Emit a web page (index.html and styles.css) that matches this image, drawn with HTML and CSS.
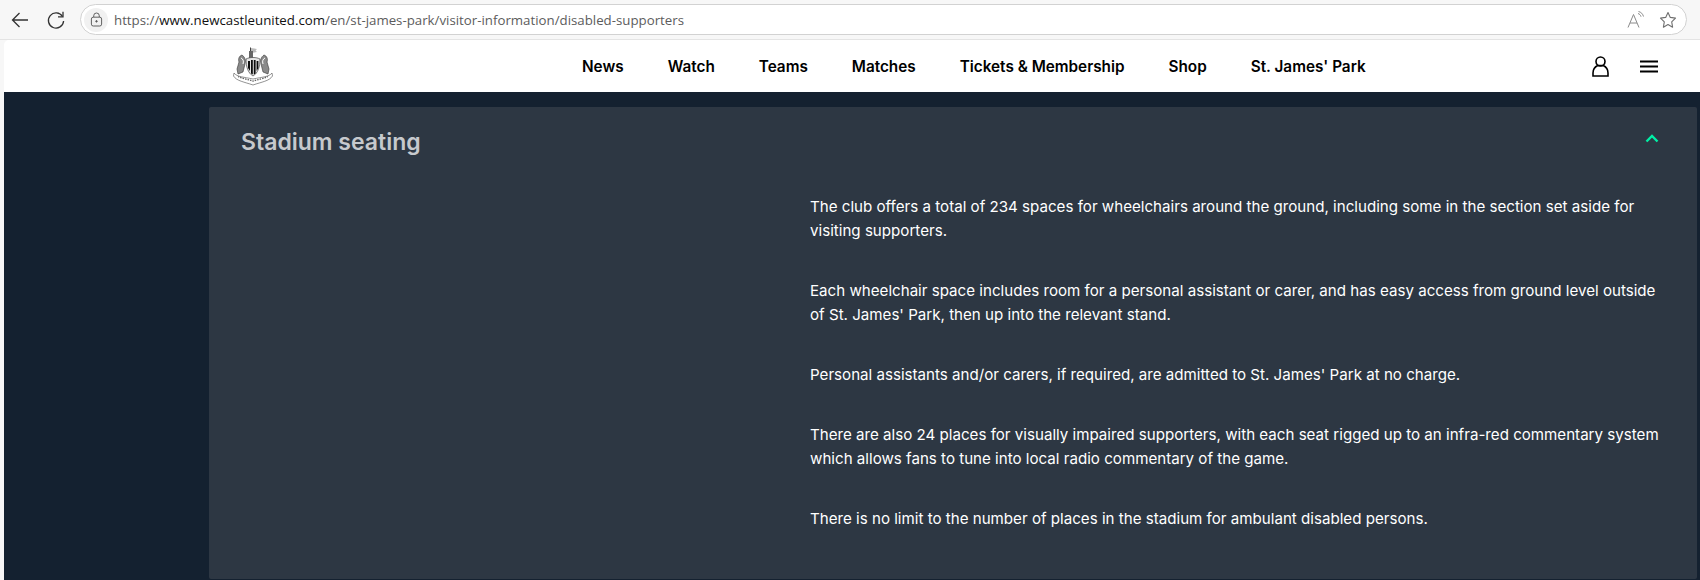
FILE: index.html
```html
<!DOCTYPE html>
<html lang="en">
<head>
<meta charset="utf-8">
<title>Disabled Supporters</title>
<link rel="stylesheet" href="styles.css">
</head>
<body>
<div class="chrome">
  <button class="tool" aria-label="Back">
    <svg width="20" height="20" viewBox="0 0 20 20" fill="none" stroke="#333" stroke-width="1.3"><path d="M18 10H2.500M9.500 3l-7 7 7 7"/></svg>
  </button>
  <button class="tool" aria-label="Reload">
    <svg width="20" height="20" viewBox="0 0 20 20" fill="none" stroke="#333" stroke-width="1.3"><path d="M16.500 6.500A7.600 7.600 0 1 0 17.600 11"/><path d="M17 1.800v5h-5"/></svg>
  </button>
  <div class="omnibox">
    <span class="lock">
      <svg width="13" height="15" viewBox="0 0 14 16" fill="none" stroke="#555" stroke-width="1"><rect x="1.500" y="5.500" width="11" height="9.500" rx="2"/><path d="M4 5.500V4a3 3 0 0 1 6 0v1.500"/><circle cx="7" cy="10" r=".8" fill="#555"/></svg>
    </span>
    <span class="url"><span class="url-dim">https://</span><span class="url-host">www.newcastleunited.com</span><span class="url-dim">/en/st-james-park/visitor-information/disabled-supporters</span></span>
    <span class="omni-icons">
      <svg width="18" height="18" viewBox="0 0 18 18" fill="none" stroke="#8a8a8a" stroke-width="1"><path d="M1 16.500 6.500 3.500l5.500 13M3 12h7"/><path d="M11 2.500c1.600.5 2.600 1.600 3 3.200M11.500 .5c2.600.6 4.300 2.400 5 5"/></svg>
      <svg width="18" height="18" viewBox="0 0 18 18" fill="none" stroke="#6f6f6f" stroke-width="1.100"><path d="M9 1.500l2.300 4.900 5.200.7-3.800 3.700.9 5.400L9 13.600l-4.600 2.600.9-5.400L1.500 7.100l5.200-.7z" stroke-linejoin="round"/></svg>
    </span>
  </div>
</div>
<div class="page">
  <header class="nav">
    <a class="crest" aria-label="Newcastle United">
      <svg width="40" height="40" viewBox="0 0 40 40">
        <path d="M17.500 1.500v13" stroke="#444" stroke-width="1"/>
        <path d="M18 2l6 1-1.500 1.500L24 6l-6 1z" fill="#bbb"/>
        <rect x="16" y="5" width="4" height="7" fill="#666"/>
        <path d="M9 9c-3 1-4 4-3 7l-2 7 1 5 5-2 2-8c1-4 0-7-3-9z" fill="#8a8a8a" stroke="#333" stroke-width=".6"/>
        <path d="M31 9c3 1 4 4 3 7l2 7-1 5-5-2-2-8c-1-4 0-7 3-9z" fill="#8a8a8a" stroke="#333" stroke-width=".6"/>
        <path d="M8 12c2 1 3 3 2 6M32 12c-2 1-3 3-2 6" stroke="#fff" stroke-width="1" fill="none"/>
        <path d="M13 13c2-1 4-1.500 7-1.500s5 .5 7 1.500c0 8-2 14-7 17-5-3-7-9-7-17z" fill="#e6e6e6" stroke="#444" stroke-width=".7"/>
        <path d="M15 15h2v10l-2-3zM18 14h1.800v14.500L18 27.500zM20.800 14h1.800v13.500l-1.800 1zM23.600 15h1.800v7l-1.800 3z" fill="#0d0d0d"/>
        <path d="M1 27c3 4 10 4 19 6 9-2 16-2 19-6l.5 3c-3 5-11 6-19.500 9C11.500 36 3.500 35 .5 30z" fill="#fff" stroke="#666" stroke-width=".7"/>
        <path d="M5 30.500c4 2 10 3 15 4.500 5-1.500 11-2.500 15-4.500" fill="none" stroke="#666" stroke-width="1.300" stroke-dasharray="1.500 1"/>
      </svg>
    </a>
    <nav class="menu">
      <a>News</a><a>Watch</a><a>Teams</a><a>Matches</a><a>Tickets &amp; Membership</a><a>Shop</a><a>St. James' Park</a>
    </nav>
    <div class="nav-icons">
      <svg width="17" height="21" viewBox="0 0 17 21" fill="none" stroke="#000" stroke-width="1.600"><circle cx="8.500" cy="5.500" r="4.500"/><path d="M1 20v-3c0-4 2.500-6.500 4.800-7.500h5.400C13.500 10.500 16 13 16 17v3z"/></svg>
      <svg width="18" height="13" viewBox="0 0 18 13" fill="#000"><rect width="18" height="2" y=".5"/><rect width="18" height="2" y="5.500"/><rect width="18" height="2" y="10.500"/></svg>
    </div>
  </header>
  <main class="main">
    <section class="panel">
      <div class="panel-head">
        <h2>Stadium seating</h2>
        <svg class="chev" width="14" height="9" viewBox="0 0 14 9" fill="none" stroke="#00efa6" stroke-width="2.400"><path d="M1.500 7.500 7 2l5.500 5.500"/></svg>
      </div>
      <div class="panel-body">
        <p>The club offers a total of 234 spaces for wheelchairs around the ground, including some in the section set aside for visiting supporters.</p>
        <p>Each wheelchair space includes room for a personal assistant or carer, and has easy access from ground level outside of St. James' Park, then up into the relevant stand.</p>
        <p>Personal assistants and/or carers, if required, are admitted to St. James' Park at no charge.</p>
        <p>There are also 24 places for visually impaired supporters, with each seat rigged up to an infra-red commentary system which allows fans to tune into local radio commentary of the game.</p>
        <p>There is no limit to the number of places in the stadium for ambulant disabled persons.</p>
      </div>
    </section>
  </main>
</div>
</body>
</html>
```
FILE: styles.css
```css
* { box-sizing: border-box; }
html, body { margin: 0; height: 100%; overflow: hidden; }
body {
  background: #f7f7f7;
  font-family: Inter, "Liberation Sans", sans-serif;
  display: flex;
  flex-direction: column;
  height: 580px;
}
.chrome {
  height: 40px;
  flex: none;
  display: flex;
  align-items: center;
  padding: 0 13px 0 2px;
  border-bottom: 1px solid #e4e4e4;
}
.tool {
  width: 36px;
  height: 30px;
  padding: 0;
  border: 0;
  background: none;
  display: flex;
  align-items: center;
  justify-content: center;
}
.tool + .tool { margin-right: 6px; }
.omnibox {
  flex: 1;
  height: 31px;
  background: #fff;
  border: 1px solid #d2d2d2;
  border-radius: 16px;
  display: flex;
  align-items: center;
  font-family: "Open Sans", sans-serif;
  font-size: 13.28px;
  padding: 0 9px 0 3px;
}
.lock {
  width: 24px;
  height: 24px;
  border-radius: 50%;
  background: #f1f1f1;
  display: flex;
  align-items: center;
  justify-content: center;
  margin-right: 6px;
  flex: none;
}
.url { flex: 1; white-space: nowrap; }
.url-dim { color: #5c5c5c; }
.url-host { color: #111; }
.omni-icons { display: flex; gap: 14px; align-items: center; }
.page {
  flex: 1;
  margin-left: 4px;
  display: flex;
  flex-direction: column;
  min-height: 0;
  border-radius: 5px 0 0 0;
  overflow: hidden;
}
.nav {
  height: 52px;
  flex: none;
  background: #fff;
  display: flex;
  align-items: center;
  padding-left: 229px;
}
.crest { width: 40px; height: 40px; display: block; }
.menu {
  margin-left: 309px;
  display: flex;
  gap: 44px;
  font-size: 15.3px;
  font-weight: 600;
  color: #000;
}
.nav-icons {
  margin-left: auto;
  display: flex;
  align-items: center;
  gap: 31px;
  padding-right: 42px;
}
.main {
  flex: 1;
  background: #142130;
  padding: 15px 3px 1px 205px;
  min-height: 0;
  display: flex;
}
.panel {
  flex: 1;
  background: #2d3743;
  border-radius: 2px;
}
.panel-head {
  height: 68px;
  padding: 0 38px 0 32px;
  display: flex;
  align-items: center;
  justify-content: space-between;
}
.panel-head h2 {
  margin: 2px 0 0;
  font-size: 23px;
  font-weight: 600;
  color: #c6c9cd;
}
.chev { margin-top: -6px; }
.panel-body {
  padding: 20px 34px 0 601px;
  color: #fff;
  font-size: 15.14px;
  line-height: 24px;
}
.panel-body p { margin: 0 0 36px; }
```
